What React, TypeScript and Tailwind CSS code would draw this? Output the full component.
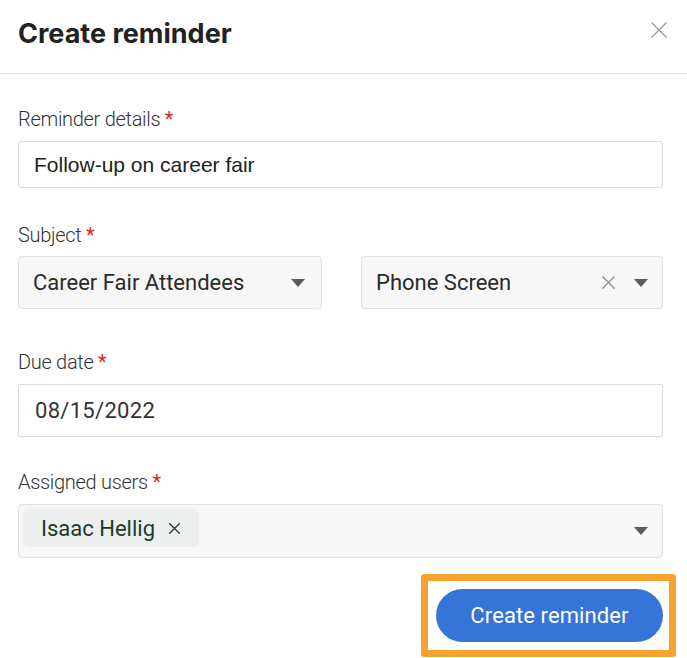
import React from "react";

function Caret() {
  return (
    <svg width="14" height="8" viewBox="0 0 14 8" className="shrink-0">
      <path d="M0 0h14L7 8z" fill="#5b5b5b" />
    </svg>
  );
}

function Cross({ size, color, stroke }: { size: number; color: string; stroke: number }) {
  return (
    <svg width={size} height={size} viewBox="0 0 16 16" className="shrink-0">
      <path d="M1 1L15 15M15 1L1 15" stroke={color} strokeWidth={stroke} strokeLinecap="square" />
    </svg>
  );
}

function Label({ text, className }: { text: string; className?: string }) {
  return (
    <div className={"h-6 leading-6 text-[20px] font-light text-[#333] tracking-[-0.3px] " + (className ?? "")}>
      {text} <span className="text-[#d9261c] font-normal">*</span>
    </div>
  );
}

export default function App() {
  return (
    <div className="w-[687px] h-[658px] bg-white overflow-hidden font-['Roboto',sans-serif]">
      <header className="h-[74px] border-b border-[#e2e2e2] flex items-start justify-between pl-[18px] pr-[20px]">
        <h1 className="mt-[18px] text-[27px] leading-8 font-bold text-[#222] tracking-[0px] font-['Inter',sans-serif]">
          Create reminder
        </h1>
        <div className="mt-[22px]">
          <Cross size={16} color="#9a9a9a" stroke={1.3} />
        </div>
      </header>

      <div className="px-[18px] pr-[24px]">
        <Label text="Reminder details" className="mt-[33px]" />
        <div className="mt-[10px] h-[47px] border border-[#dcdcdc] rounded-[3px] bg-white flex items-center pl-[15px] text-[21px] text-[#222] font-['Liberation_Sans',sans-serif]">
          Follow-up on career fair
        </div>

        <Label text="Subject" className="mt-[35px]" />
        <div className="mt-[9px] flex gap-[39px]">
          <div className="flex-1 h-[53px] border border-[#e0e0e0] rounded-[4px] bg-[#f7f7f7] flex items-center pl-[14px] pr-[16px]">
            <span className="flex-1 text-[22px] text-[#2a2a2a]">Career Fair Attendees</span>
            <Caret />
          </div>
          <div className="flex-1 h-[53px] border border-[#e0e0e0] rounded-[4px] bg-[#f7f7f7] flex items-center pl-[14px] pr-[14px]">
            <span className="flex-1 text-[22px] text-[#2a2a2a]">Phone Screen</span>
            <Cross size={13} color="#8f8f8f" stroke={1.6} />
            <div className="ml-[19px]">
              <Caret />
            </div>
          </div>
        </div>

        <Label text="Due date" className="mt-[41px]" />
        <div className="mt-[10px] h-[53px] border border-[#dcdcdc] rounded-[2px] bg-white flex items-center pl-[16px] text-[22px] tracking-[0.3px] text-[#333]">
          08/15/2022
        </div>

        <Label text="Assigned users" className="mt-[33px]" />
        <div className="mt-[10px] h-[54px] border border-[#e0e0e0] rounded-[4px] bg-[#f7f7f7] flex items-start pl-[4px] pr-[14px]">
          <div className="mt-[4px] h-[38px] w-[176px] rounded-[6px] bg-[#ecefed] flex items-center pl-[18px] gap-[14px] text-[22px] text-[#1c3b2c]">
            <span>Isaac Hellig</span>
            <Cross size={11} color="#1c3b2c" stroke={1.8} />
          </div>
          <div className="flex-1" />
          <div className="mt-[22px]">
            <Caret />
          </div>
        </div>
      </div>

      <div className="mt-[16px] flex justify-end pr-[11px]">
        <div className="border-[7px] border-[#f6a42f] rounded-[3px] pl-[8px] pr-[6px] py-[8px]">
          <button className="h-[53px] w-[227px] rounded-full bg-[#3674d7] text-white text-[22px] font-normal tracking-[0.1px]">
            Create reminder
          </button>
        </div>
      </div>
    </div>
  );
}
